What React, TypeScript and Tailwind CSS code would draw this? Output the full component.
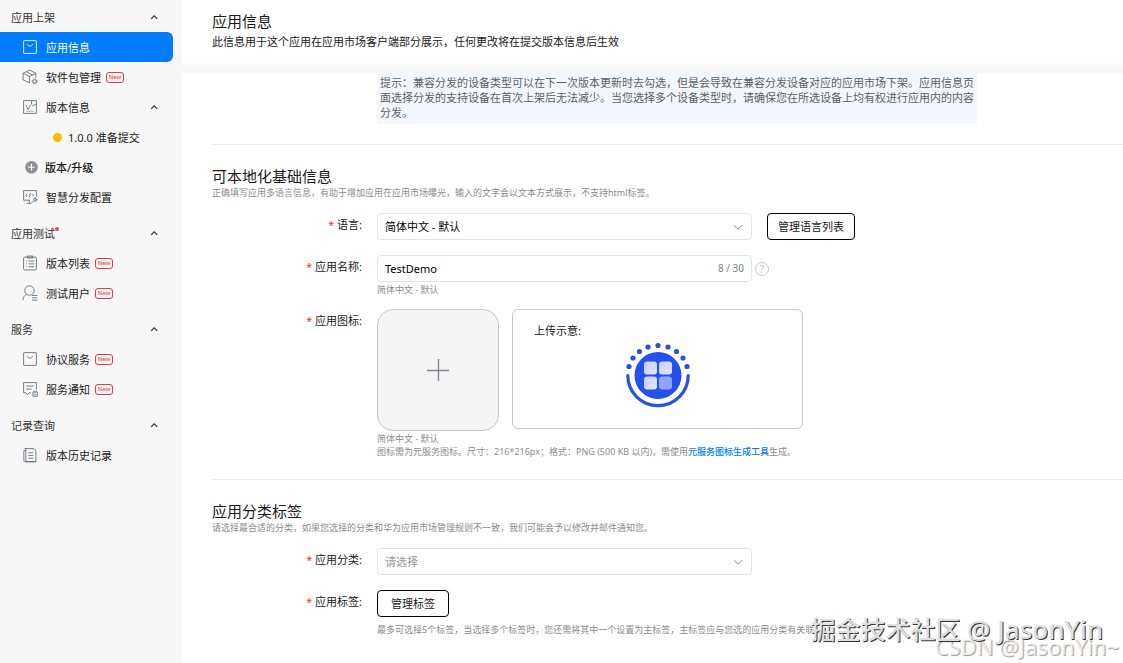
import React, { useState } from 'react';
import clsx from 'clsx';

type IconName = 'bag' | 'package' | 'version' | 'plus' | 'config' | 'list' | 'user' | 'message' | 'history';

interface NavItem {
  label: string;
  icon?: IconName;
  isNew?: boolean;
  active?: boolean;
  expandable?: boolean;
  status?: boolean;
}

interface NavSection {
  title: string;
  dot?: boolean;
  items: NavItem[];
}

const NAV: NavSection[] = [
  {
    title: '应用上架',
    items: [
      { label: '应用信息', icon: 'bag', active: true },
      { label: '软件包管理', icon: 'package', isNew: true },
      { label: '版本信息', icon: 'version', expandable: true },
      { label: '1.0.0 准备提交', status: true },
      { label: '版本/升级', icon: 'plus' },
      { label: '智慧分发配置', icon: 'config' },
    ],
  },
  {
    title: '应用测试',
    dot: true,
    items: [
      { label: '版本列表', icon: 'list', isNew: true },
      { label: '测试用户', icon: 'user', isNew: true },
    ],
  },
  {
    title: '服务',
    items: [
      { label: '协议服务', icon: 'bag', isNew: true },
      { label: '服务通知', icon: 'message', isNew: true },
    ],
  },
  {
    title: '记录查询',
    items: [{ label: '版本历史记录', icon: 'history' }],
  },
];

const ICON_PATHS: Record<Exclude<IconName, 'plus'>, React.ReactNode> = {
  bag: (
    <>
      <rect x="1.5" y="1.5" width="12" height="12" rx="0.4" />
      <path d="M4.8 4.8c.6 1.2 1.6 1.8 2.7 1.8s2.1-.6 2.7-1.8" />
    </>
  ),
  package: (
    <>
      <path d="M7 13 1 10.2V4l6-3 6 3v4M1 4l6 3 6-3M7 7v6M4 2.6l6 3" />
      <circle cx="11.8" cy="11.6" r="2.4" strokeDasharray="1.2 0.7" />
      <circle cx="11.8" cy="11.6" r="1.6" />
    </>
  ),
  version: (
    <>
      <path d="M9 1.5H1.5v12h12V6" />
      <path d="M3.6 5.5 5.8 10 8 5.5" />
      <path d="M9 1.5h4.5V6L12 5l-1.5 1.5L9 5z" />
      <path d="M4 11.5h7" strokeWidth="0.5" />
    </>
  ),
  config: (
    <>
      <path d="M13.5 7V1.5h-12v9h6M4.5 13.5h4M6.8 10.5v3" />
      <path d="M4.8 4.5 3.6 6l1.2 1.5M8 4l-1.2 4M9.6 4.5 10.8 6l-.6.8" />
      <path d="m8.5 13.5 3-3M11 9.2c.6-1 1.6-1.2 2.3-.8l-1.2 1.3.9.8 1.2-1c.2 1-.5 2-1.6 2-1 0-1.8-1-1.6-2.3z" />
    </>
  ),
  list: (
    <>
      <rect x="1.5" y="2" width="12" height="12" rx="1" />
      <path d="M4.8 1h5.4v1.8H4.8zM3.8 5.7h.8M6 5.7h5.5M3.8 8.3h.8M6 8.3h5.5M3.8 11h.8M6 11h5.5" />
    </>
  ),
  user: (
    <>
      <circle cx="7" cy="5.2" r="4.4" />
      <path d="M.8 14.2c.3-2.8 1.6-4.4 3.6-5.4M9.4 9.8h5M9.4 12h5M9.4 14.2h5" />
    </>
  ),
  message: (
    <>
      <path d="M13.5 8V1.5h-12v9.5h2.2l1.5 2 1.6-2h1.7M4 4.8h7M4 7.6h5" />
      <rect x="10.3" y="10.3" width="4" height="4" />
      <path d="M11.2 9v1.3M13.4 9v1.3M11.5 12.3h1.6" />
    </>
  ),
  history: (
    <>
      <path d="M3.5 3.5H1.7v9c0 .8.5 1.3 1.3 1.3h9.5" />
      <path d="M2.5 1.5h8.7l1.8 2v10.3H3.6V1.5z" />
      <path d="M6 5.5h4.6M6 8h4.6M6 10.5h4.6" />
    </>
  ),
};

const NavIcon: React.FC<{ name: IconName; active?: boolean }> = ({ name, active }) => {
  if (name === 'plus') {
    return (
      <svg className="size-4 shrink-0" viewBox="0 0 16 16" aria-hidden="true">
        <circle cx="9.5" cy="8.3" r="6.3" fill="#8f9194" />
        <path d="M6.3 8.3h6.4M9.5 5.1v6.4" stroke="#fff" strokeWidth="1.1" />
      </svg>
    );
  }
  return (
    <svg
      className={clsx('size-4 shrink-0', active ? 'text-white' : 'text-[#66686b]')}
      viewBox="0 0 15 15"
      fill="none"
      stroke="currentColor"
      strokeWidth="0.8"
      strokeLinejoin="round"
      aria-hidden="true"
    >
      {ICON_PATHS[name]}
    </svg>
  );
};

const ChevronUp = () => (
  <svg className="ml-auto size-2 shrink-0" viewBox="0 0 8 8" fill="none" stroke="#333" strokeWidth="1.2" aria-hidden="true">
    <path d="M1.2 5.8 4.2 2.8l3 3" />
  </svg>
);

const NewBadge = () => (
  <span className="ml-[5px] flex h-[11px] w-[18px] items-center justify-center rounded-[3px] border border-[#dd3f45] bg-[#fff0f0] text-[6px] leading-none text-[#dd3f45]">
    New
  </span>
);

const SidebarItem: React.FC<{ item: NavItem }> = ({ item }) => (
  <li>
    <a
      href="#"
      aria-current={item.active ? 'page' : undefined}
      className={clsx(
        'flex h-[30px] items-center pr-[15px]',
        item.status ? 'pl-[53px]' : 'pl-[22px]',
        item.active && 'rounded-r-md bg-[#007dff] text-white'
      )}
    >
      {item.icon && <NavIcon name={item.icon} active={item.active} />}
      {item.status && <span className="size-[9px] shrink-0 rounded-full bg-[#fbbc05]" />}
      <span
        className={clsx(
          'whitespace-nowrap',
          item.icon === 'plus' ? 'ml-[7px] font-medium' : item.status ? 'ml-1.5' : 'ml-2'
        )}
      >
        {item.label}
      </span>
      {item.isNew && <NewBadge />}
      {item.expandable && <ChevronUp />}
    </a>
  </li>
);

const Sidebar = () => (
  <aside className="w-[182px] shrink-0 bg-[#f7f7f7] pt-0.5 pr-[9px]">
    <nav className="flex flex-col gap-1.5">
      {NAV.map((section) => (
        <section key={section.title}>
          <button type="button" className="flex h-[30px] w-full items-center pr-[15px] pl-[11px] text-[#333]">
            <span>{section.title}</span>
            {section.dot && <span className="mb-2 size-1 rounded-full bg-[#f5484d]" />}
            <ChevronUp />
          </button>
          <ul>
            {section.items.map((item) => (
              <SidebarItem key={item.label} item={item} />
            ))}
          </ul>
        </section>
      ))}
    </nav>
  </aside>
);

const Field: React.FC<{ label: string; htmlFor: string; children: React.ReactNode }> = ({ label, htmlFor, children }) => (
  <div className="grid grid-cols-[150px_minmax(0,1fr)] gap-x-[15px]">
    <label htmlFor={htmlFor} className="h-6 text-right leading-6">
      <span className="text-[#e84026]">* </span>
      {label}:
    </label>
    <div>{children}</div>
  </div>
);

const SelectBox: React.FC<{ id: string; value: string; muted?: boolean }> = ({ id, value, muted }) => (
  <div className="relative w-[375px]">
    <select
      id={id}
      defaultValue={value}
      className={clsx(
        'h-[27px] w-full appearance-none rounded border border-[#e3e5e8] bg-white px-[7px] outline-none focus:border-[#007dff]',
        muted ? 'text-[#999]' : 'text-black'
      )}
    >
      <option>{value}</option>
    </select>
    <svg className="pointer-events-none absolute top-2 right-2 size-3" viewBox="0 0 12 12" fill="none" stroke="#8f9194" aria-hidden="true">
      <path d="M2 4.2 6 8.2l4-4" />
    </svg>
  </div>
);

const OutlineButton: React.FC<{ id?: string; className?: string; children: React.ReactNode }> = ({ id, className, children }) => (
  <button id={id} type="button" className={clsx('h-[27px] rounded border border-black bg-white', className)}>
    {children}
  </button>
);

const SectionTitle: React.FC<{ title: string; desc: string }> = ({ title, desc }) => (
  <div>
    <h2 className="text-[15px] leading-5">{title}</h2>
    <p className="text-[9px] leading-[14px] text-[#8c8c8c]">{desc}</p>
  </div>
);

const DOTS = [
  [4, 24.5],
  [8, 16],
  [14.5, 9.5],
  [23, 5],
  [33, 3.5],
  [43, 5],
  [51.5, 9.5],
  [58, 16],
  [62, 24.5],
];

const SampleLogo = () => (
  <svg className="mx-auto mt-[3px] size-[66px]" viewBox="0 0 66 66" role="img" aria-label="图标示例">
    <defs>
      <linearGradient id="tile" x1="0" y1="0" x2="1" y2="1">
        <stop offset="0" stopColor="#c3cdfb" />
        <stop offset="1" stopColor="#e3e8fe" />
      </linearGradient>
    </defs>
    {DOTS.map(([x, y]) => (
      <circle key={x} cx={x} cy={y} r="2.6" fill="#2a50e8" />
    ))}
    <path d="M2.8 33.5a30.2 30.2 0 0 0 60.4 0" fill="none" stroke="#2a50e8" strokeWidth="3.2" strokeLinecap="round" />
    <circle cx="33" cy="33.5" r="23.5" fill="#2450f0" />
    <rect x="19" y="19.5" width="13" height="13" rx="3" fill="url(#tile)" />
    <rect x="34" y="19.5" width="13" height="13" rx="3" fill="url(#tile)" />
    <rect x="19" y="34.5" width="13" height="13" rx="3" fill="url(#tile)" />
    <rect x="34" y="34.5" width="13" height="13" rx="3" fill="#90a5fb" />
  </svg>
);

const App: React.FC = () => {
  const [name, setName] = useState('TestDemo');

  return (
    <div className="relative flex min-h-screen overflow-hidden bg-white font-['Noto_Sans','Noto_Sans_CJK_SC',sans-serif] text-[11px] leading-[15px] text-[#1a1a1a]">
      <Sidebar />

      <main className="min-w-0 flex-1">
        <header className="px-[30px] pt-[11px] pb-3.5">
          <h1 className="text-[15px] leading-5">应用信息</h1>
          <p className="mt-[3px]">此信息用于这个应用在应用市场客户端部分展示，任何更改将在提交版本信息后生效</p>
        </header>
        <div className="h-2.5 bg-linear-to-b from-[#fbfbfb] to-[#f6f6f6]" />

        <div className="pl-[30px]">
          <div className="ml-[165px] w-[600px] bg-[#f3f8ff] px-[3px] pt-0.5 pb-1 text-[#5c5f63]">
            提示：兼容分发的设备类型可以在下一次版本更新时去勾选，但是会导致在兼容分发设备对应的应用市场下架。应用信息页面选择分发的支持设备在首次上架后无法减少。当您选择多个设备类型时，请确保您在所选设备上均有权进行应用内的内容分发。
          </div>

          <section className="mt-5 border-t border-[#ededed] pt-[21px]">
            <SectionTitle title="可本地化基础信息" desc="正确填写应用多语言信息，有助于增加应用在应用市场曝光，输入的文字会以文本方式展示，不支持html标签。" />

            <div className="mt-[13px] flex flex-col">
              <Field label="语言" htmlFor="language">
                <div className="flex gap-[15px]">
                  <SelectBox id="language" value="简体中文 - 默认" />
                  <OutlineButton className="w-[88px]">管理语言列表</OutlineButton>
                </div>
              </Field>

              <div className="mt-[15px]">
                <Field label="应用名称" htmlFor="app-name">
                  <div className="flex items-center gap-[3px]">
                    <div className="flex h-[27px] w-[375px] items-center rounded border border-[#e3e5e8] px-[7px] focus-within:border-[#007dff]">
                      <input
                        id="app-name"
                        type="text"
                        maxLength={30}
                        value={name}
                        onChange={(e) => setName(e.target.value)}
                        className="min-w-0 flex-1 bg-transparent text-black outline-none"
                      />
                      <span className="text-[10px] text-[#808080]">{name.length} / 30</span>
                    </div>
                    <button
                      type="button"
                      aria-label="帮助"
                      className="flex size-[14px] items-center justify-center rounded-full border border-[#cccccc] text-[10px] leading-none text-[#b8b8b8]"
                    >
                      ?
                    </button>
                  </div>
                  <p className="mt-px text-[9px] leading-[14px] text-[#8c8c8c]">简体中文 - 默认</p>
                </Field>
              </div>

              <div className="mt-3">
                <Field label="应用图标" htmlFor="app-icon">
                  <div className="flex items-start gap-[13px]">
                    <button
                      id="app-icon"
                      type="button"
                      aria-label="上传图标"
                      className="flex size-[122px] items-center justify-center rounded-2xl border border-[#c8c8c8] bg-[#f5f5f5]"
                    >
                      <svg className="size-6" viewBox="0 0 24 24" stroke="#85878a" strokeWidth="1.4" aria-hidden="true">
                        <path d="M1 12.5h22M12.5 1v22" />
                      </svg>
                    </button>
                    <div className="h-[120px] w-[291px] rounded-md border border-[#c8c8c8] pt-3">
                      <p className="pl-[21px] leading-[17px]">上传示意:</p>
                      <SampleLogo />
                    </div>
                  </div>
                  <p className="mt-px text-[9px] leading-[13px] text-[#8c8c8c]">简体中文 - 默认</p>
                  <p className="text-[9px] leading-[14px] text-[#8c8c8c]">
                    图标需为元服务图标。尺寸：216*216px；格式：PNG (500 KB 以内)，需使用
                    <a href="#" className="font-medium text-[#007dff]">元服务图标生成工具</a>
                    生成。
                  </p>
                </Field>
              </div>
            </div>
          </section>

          <section className="mt-5 border-t border-[#ededed] pt-[21px]">
            <SectionTitle title="应用分类标签" desc="请选择最合适的分类，如果您选择的分类和华为应用市场管理规则不一致，我们可能会予以修改并邮件通知您。" />

            <div className="mt-[13px] flex flex-col gap-[15px]">
              <Field label="应用分类" htmlFor="category">
                <SelectBox id="category" value="请选择" muted />
              </Field>
              <Field label="应用标签" htmlFor="tags">
                <OutlineButton id="tags" className="w-[72px]">管理标签</OutlineButton>
                <p className="mt-1.5 text-[9px] leading-[14px] whitespace-nowrap text-[#8c8c8c]">
                  最多可选择5个标签，当选择多个标签时，您还需将其中一个设置为主标签，主标签应与您选的应用分类有关联
                </p>
              </Field>
            </div>
          </section>
        </div>
      </main>

      {/* watermarks */}
      <div className="pointer-events-none absolute right-1 bottom-0.5 text-[22px] leading-[30px] whitespace-nowrap text-[#fafafa]/80 [text-shadow:1px_1px_1px_#9a9a9a]">
        CSDN @JasonYin~
      </div>
      <div className="pointer-events-none absolute right-5 bottom-4 text-[25px] leading-9 font-medium whitespace-nowrap text-[#dedede] [text-shadow:1px_1px_0_#333]">
        掘金技术社区 <span className="text-[26px]">@ JasonYin</span>
      </div>
    </div>
  );
};

export default App;
